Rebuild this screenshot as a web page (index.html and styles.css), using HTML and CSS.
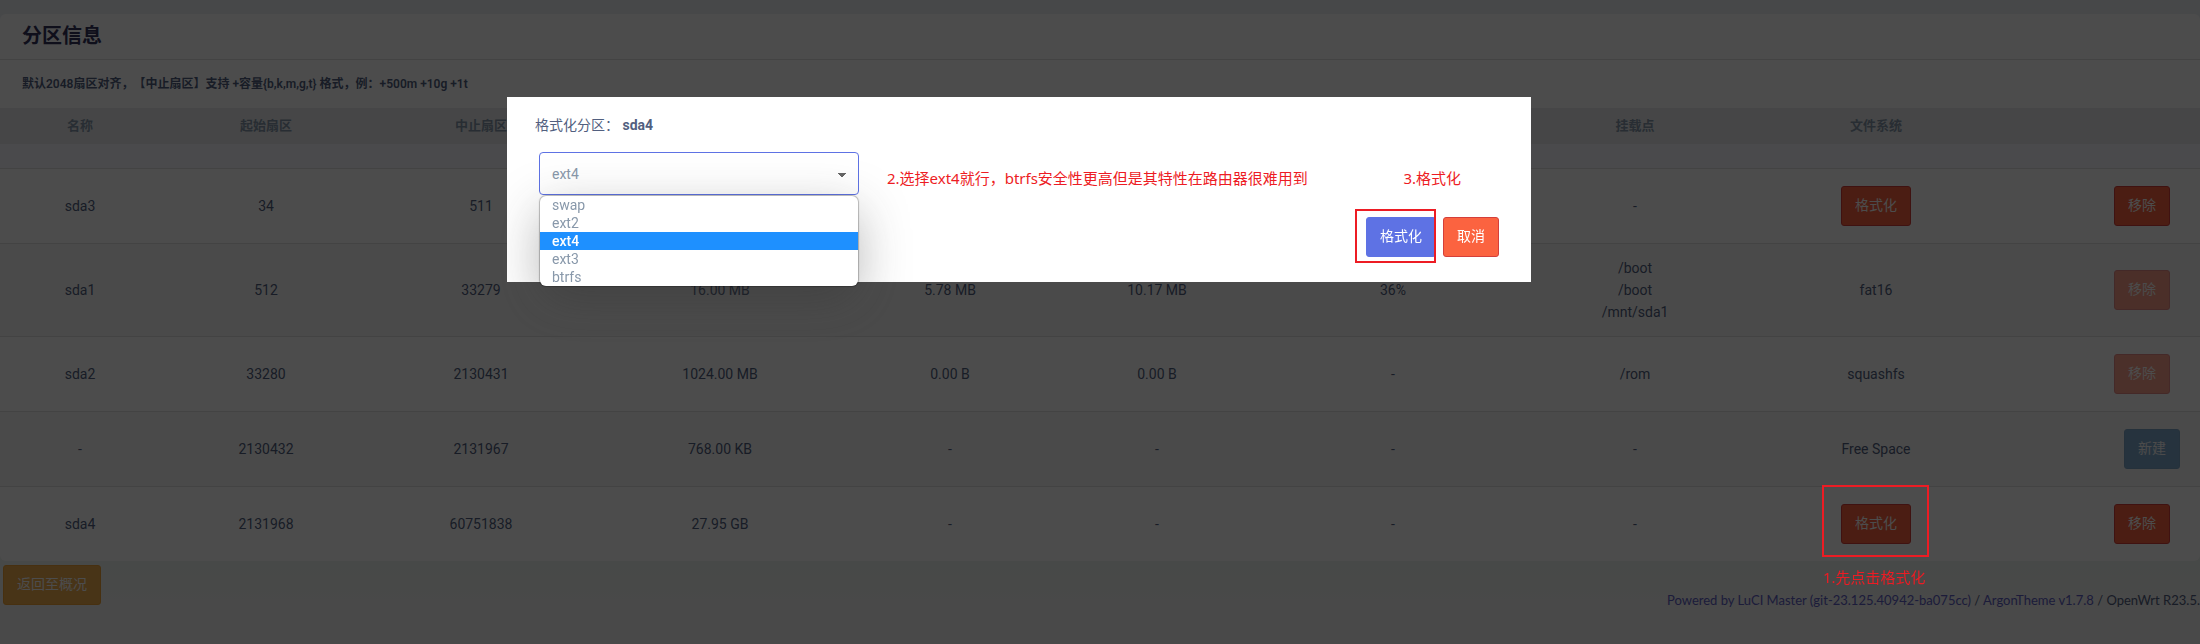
FILE: index.html
```html
<!DOCTYPE html>
<html lang="zh-CN">
<head>
<meta charset="utf-8">
<meta name="viewport" content="width=device-width, initial-scale=1">
<title>分区信息</title>
<link rel="stylesheet" href="styles.css">
</head>
<body>
<main class="page">
  <section class="card">
    <h2 class="card-title">分区信息</h2>
    <p class="card-note">默认2048扇区对齐，【中止扇区】支持 +容量{b,k,m,g,t} 格式，例：+500m +10g +1t</p>
    <table class="parts">
      <colgroup>
        <col class="c-name"><col class="c-start"><col class="c-end"><col class="c-size"><col class="c-used"><col class="c-free"><col class="c-usage"><col class="c-mount"><col class="c-fs"><col class="c-action">
      </colgroup>
      <thead>
        <tr><th>名称</th><th>起始扇区</th><th>中止扇区</th><th>容量</th><th>已用</th><th>可用</th><th>使用率</th><th>挂载点</th><th>文件系统</th><th></th></tr>
        <tr class="spacer"><td colspan="10"></td></tr>
      </thead>
      <tbody>
        <tr><td>sda3</td><td>34</td><td>511</td><td></td><td></td><td></td><td></td><td>-</td><td><button class="btn danger" type="button">格式化</button></td><td class="actions"><button class="btn danger remove" type="button">移除</button></td></tr>
        <tr><td>sda1</td><td>512</td><td>33279</td><td>16.00 MB</td><td>5.78 MB</td><td>10.17 MB</td><td>36%</td><td>/boot<br>/boot<br>/mnt/sda1</td><td>fat16</td><td class="actions"><button class="btn danger remove" type="button" disabled>移除</button></td></tr>
        <tr><td>sda2</td><td>33280</td><td>2130431</td><td>1024.00 MB</td><td>0.00 B</td><td>0.00 B</td><td>-</td><td>/rom</td><td>squashfs</td><td class="actions"><button class="btn danger remove" type="button" disabled>移除</button></td></tr>
        <tr><td>-</td><td>2130432</td><td>2131967</td><td>768.00 KB</td><td>-</td><td>-</td><td>-</td><td>-</td><td>Free Space</td><td class="actions"><button class="btn create" type="button" disabled>新建</button></td></tr>
        <tr><td>sda4</td><td>2131968</td><td>60751838</td><td>27.95 GB</td><td>-</td><td>-</td><td>-</td><td>-</td><td><button class="btn danger" type="button">格式化</button></td><td class="actions"><button class="btn danger remove" type="button">移除</button></td></tr>
      </tbody>
    </table>
  </section>
  <div class="page-actions"><button class="btn back" type="button">返回至概况</button></div>
  <footer class="footer"><a href="#luci">Powered by LuCI Master (git-23.125.40942-ba075cc)</a> / <a href="#theme">ArgonTheme v1.7.8</a> / OpenWrt R23.5.</footer>
</main>

<div class="overlay">
  <div class="modal" role="dialog" aria-modal="true" aria-labelledby="format-label">
    <label class="modal-label" id="format-label" for="fs">格式化分区： <strong>sda4</strong></label>
    <div class="modal-row">
      <div class="picker">
        <select class="fs" id="fs">
          <option>swap</option><option>ext2</option><option selected>ext4</option><option>ext3</option><option>btrfs</option>
        </select>
        <ul class="menu" role="listbox" aria-label="文件系统">
          <li role="option">swap</li>
          <li role="option">ext2</li>
          <li role="option" aria-selected="true" class="current">ext4</li>
          <li role="option">ext3</li>
          <li role="option">btrfs</li>
        </ul>
      </div>
      <span class="hint hint-choose">2.选择ext4就行，btrfs安全性更高但是其特性在路由器很难用到</span>
      <span class="hint hint-confirm">3.格式化</span>
    </div>
    <div class="modal-actions">
      <button class="btn primary" type="button">格式化</button>
      <button class="btn danger" type="button">取消</button>
      <span class="frame frame-confirm"></span>
    </div>
  </div>
</div>
<div class="frame frame-format"></div>
<span class="hint hint-first">1.先点击格式化</span>
</body>
</html>
```
FILE: styles.css
```css
* { box-sizing: border-box; }

body {
  margin: 0;
  min-height: 100vh;
  overflow: hidden;
  background: #f3f3f3;
  color: #525f7f;
  font-family: Roboto, "Noto Sans CJK SC", sans-serif;
  font-size: 14px;
  line-height: 22px;
}

.page {
  padding-top: 14px;
  background: linear-gradient(#eef2f6 0, #eef2f6 14px, #eef3f0 560px, #f3f3f3 600px);
}

.card {
  background: #fff;
  border-radius: 6px;
  overflow: hidden;
}

.card-title {
  margin: 0;
  padding: 7px 22px 8px;
  border-bottom: 1px solid #e2e2e2;
  color: #32325d;
  font-size: 20px;
  line-height: 30px;
}

.card-note {
  margin: 0;
  padding: 13px 22px;
  font-size: 12px;
  font-weight: 600;
  text-spacing-trim: space-all;
}

.parts {
  width: 100%;
  table-layout: fixed;
  border-collapse: separate;
  border-spacing: 0;
  text-align: center;
}

.c-name { width: 160px; }
.c-start { width: 212px; }
.c-end { width: 218px; }
.c-size { width: 260px; }
.c-used { width: 200px; }
.c-free { width: 214px; }
.c-usage { width: 258px; }
.c-mount { width: 226px; }
.c-fs { width: 256px; }
.c-action { width: 196px; }

.parts th {
  height: 36px;
  padding: 0;
  background: #e9ecef;
  color: #8898aa;
  font-size: 13px;
  font-weight: 600;
}

.parts .spacer td {
  height: 24px;
  padding: 0;
  background: #f8f9fe;
}

.parts tbody td {
  height: 75px;
  padding: 13px 0;
  border-top: 1px solid #e2e2e2;
}

.parts tbody tr:nth-child(even) { background: #f9f9f9; }

.parts .actions {
  padding-right: 20px;
  text-align: right;
}

.btn {
  height: 40px;
  padding: 0 13px 2px;
  border: 1px solid transparent;
  border-radius: 3px;
  color: #fff;
  font: inherit;
}

.btn:disabled { opacity: 0.6; }
.danger { background: #fb6340; border-color: #d43f3a; }
.primary { background: #5e72e4; border-color: #5e72e4; }
.create { background: #337ab7; border-color: #2e6da4; }
.back { background: #f0ad4e; border-color: #eea236; }
.remove { margin-right: 10px; }

.page-actions {
  height: 28px;
  padding: 4px 3px 0;
}

.footer {
  text-align: right;
  white-space: nowrap;
  font-family: Lato, "Noto Sans CJK SC", sans-serif;
  font-size: 13px;
}

.footer a {
  color: #5e60c4;
  text-decoration: none;
}

.overlay {
  position: fixed;
  inset: 0;
  padding: 97px 0 0 507px;
  background: rgba(0, 0, 0, 0.7);
}

.modal {
  width: 1024px;
  max-width: 100%;
  padding: 17px 32px 25px 28px;
  background: #fff;
}

.modal-label { display: block; }

.modal-row {
  display: flex;
  align-items: center;
  padding: 16px 0 22px 4px;
}

.picker { position: relative; }

.fs {
  display: block;
  width: 320px;
  height: 43px;
  padding: 0 12px;
  border: 1px solid #5e72e4;
  border-radius: 4px;
  appearance: none;
  color: #8898aa;
  font: inherit;
  background:
    conic-gradient(from 315deg at 50% 100%, #666 90deg, transparent 0) 298px 20px / 8px 4px no-repeat,
    #fff;
}

.menu {
  position: absolute;
  top: 44px;
  left: 1px;
  width: 318px;
  margin: 0;
  padding: 0;
  overflow: hidden;
  border-radius: 6px;
  background: #fff;
  box-shadow: 0 0 1px 1px rgba(0, 0, 0, 0.25), 0 15px 50px rgba(50, 50, 50, 0.35);
  color: #8898aa;
  line-height: 18px;
  list-style: none;
}

.menu li { padding: 0 12px; }
.menu .current { background: #1e90ff; color: #fff; font-weight: 500; }

.hint {
  color: #ed1c24;
  font-family: "Noto Sans", "Noto Sans CJK SC", sans-serif;
  font-size: 15px;
  white-space: nowrap;
}

.hint-choose { margin: 8px 0 0 28px; }
.hint-confirm { margin: 8px 38px 0 auto; }

.modal-actions {
  position: relative;
  display: flex;
  justify-content: flex-end;
  gap: 7px;
}

.frame {
  position: absolute;
  border: 2px solid #ed1c24;
}

.frame-confirm { top: -8px; right: 63px; width: 81px; height: 54px; }
.frame-format { top: 485px; left: 1822px; width: 107px; height: 72px; }
.hint-first { position: absolute; top: 566px; left: 1823px; }
```
